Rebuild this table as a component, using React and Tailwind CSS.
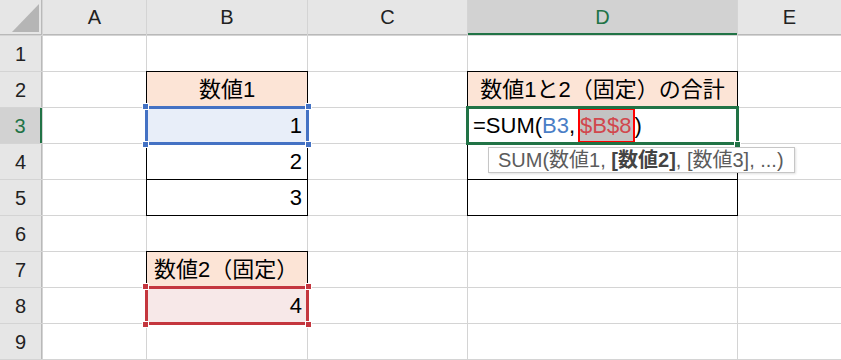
import clsx from "clsx";

const GREEN = "#217346";

function Cell({ bg = "bg-white", className, children }) {
  return (
    <div className={clsx("relative flex items-center text-[22px] text-black", bg, className)}>
      {children}
    </div>
  );
}

function ColHead({ label, active }) {
  return (
    <div
      className={clsx(
        "flex items-center justify-center text-[20px]",
        active
          ? "bg-[#d2d2d2] text-[#217346] border-b-2 border-[#217346]"
          : "bg-[#e6e6e6] text-[#222] border-b border-[#b9b9b9]"
      )}
    >
      {label}
    </div>
  );
}

function RowHead({ n, active }) {
  return (
    <div
      className={clsx(
        "flex items-center justify-center text-[20px]",
        active
          ? "bg-[#d2d2d2] text-[#217346] border-r-2 border-[#217346]"
          : "bg-[#e6e6e6] text-[#222] border-r border-[#b9b9b9]"
      )}
    >
      {n}
    </div>
  );
}

// little squares on the corners of a reference range
function Handles({ color }) {
  const base = "absolute w-[7px] h-[7px] border border-white";
  return (
    <>
      <span className={clsx(base, color, "-left-[5px] -top-[5px]")} />
      <span className={clsx(base, color, "-right-[5px] -top-[5px]")} />
      <span className={clsx(base, color, "-left-[5px] -bottom-[5px]")} />
      <span className={clsx(base, color, "-right-[5px] -bottom-[5px]")} />
    </>
  );
}

export default function App() {
  const boxed = "outline outline-black";

  return (
    <div className="w-[841px] h-[360px] overflow-hidden bg-[#d4d4d4] font-['Liberation_Sans','Noto_Sans_CJK_JP',sans-serif]">
      <div className="grid grid-cols-[42px_103px_160px_159px_269px_1fr] grid-rows-[35px_repeat(9,35px)] gap-px">
        {/* header row */}
        <div className="bg-[#e6e6e6] border-r border-b border-[#b9b9b9]">
          <svg width="41" height="34" viewBox="0 0 41 34">
            <polygon points="12,32 39,4 39,32" fill="#b5b5b5" />
          </svg>
        </div>
        <ColHead label="A" />
        <ColHead label="B" />
        <ColHead label="C" />
        <ColHead label="D" active />
        <ColHead label="E" />

        {/* 1 */}
        <RowHead n="1" />
        <Cell />
        <Cell />
        <Cell />
        <Cell />
        <Cell />

        {/* 2 */}
        <RowHead n="2" />
        <Cell />
        <Cell bg="bg-[#fce4d6]" className={clsx(boxed, "justify-center")}>数値1</Cell>
        <Cell />
        <Cell bg="bg-[#fce4d6]" className={clsx(boxed, "justify-center")}>数値1と2（固定）の合計</Cell>
        <Cell />

        {/* 3 */}
        <RowHead n="3" active />
        <Cell />
        <Cell bg="bg-[#e8eef9]" className="z-10 justify-end pr-[5px] outline-[3px] outline-offset-[-1px] outline-[#4472c4]">
          1
          <Handles color="bg-[#4472c4]" />
        </Cell>
        <Cell />
        <Cell className="z-10 items-stretch pl-[5px] outline-[3px] outline-offset-[-1px] outline-[#217346]">
          <span className="flex items-center">=SUM(</span>
          <span className="flex items-center text-[#4a7ec6]">B3</span>
          <span className="flex items-center pr-[3px]">,</span>
          <span className="flex items-center bg-[#c3c3c3] text-[#d1474d] border-2 border-[#ff0000] pr-px">$B$8</span>
          <span className="flex items-center">)</span>
          <span className="absolute -right-[4px] -bottom-[5px] w-[7px] h-[7px] border border-white" style={{ background: GREEN }} />
        </Cell>
        <Cell />

        {/* 4 */}
        <RowHead n="4" />
        <Cell />
        <Cell className={clsx(boxed, "justify-end pr-[5px]")}>2</Cell>
        <Cell />
        <Cell className={boxed}>
          <div className="absolute z-20 left-[20px] top-[3px] h-[26px] flex items-center whitespace-nowrap bg-white border border-[#c6c6c6] pl-[9px] pr-[10px] text-[20px] text-[#5c5c5c] shadow-[1px_1px_2px_rgba(0,0,0,0.12)]">
            SUM(数値1,&nbsp;<b className="font-bold text-[#444]">[数値2]</b>, [数値3], ...)
          </div>
        </Cell>
        <Cell />

        {/* 5 */}
        <RowHead n="5" />
        <Cell />
        <Cell className={clsx(boxed, "justify-end pr-[5px]")}>3</Cell>
        <Cell />
        <Cell className={boxed} />
        <Cell />

        {/* 6 */}
        <RowHead n="6" />
        <Cell />
        <Cell />
        <Cell />
        <Cell />
        <Cell />

        {/* 7 */}
        <RowHead n="7" />
        <Cell />
        <Cell bg="bg-[#fce4d6]" className={clsx(boxed, "pl-[7px]")}>数値2（固定）</Cell>
        <Cell />
        <Cell />
        <Cell />

        {/* 8 */}
        <RowHead n="8" />
        <Cell />
        <Cell bg="bg-[#f7e8e8]" className="z-10 justify-end pr-[5px] outline-[3px] outline-offset-[-1px] outline-[#c4363e]">
          4
          <Handles color="bg-[#c4363e]" />
        </Cell>
        <Cell />
        <Cell />
        <Cell />

        {/* 9 */}
        <RowHead n="9" />
        <Cell />
        <Cell />
        <Cell />
        <Cell />
        <Cell />
      </div>
    </div>
  );
}
